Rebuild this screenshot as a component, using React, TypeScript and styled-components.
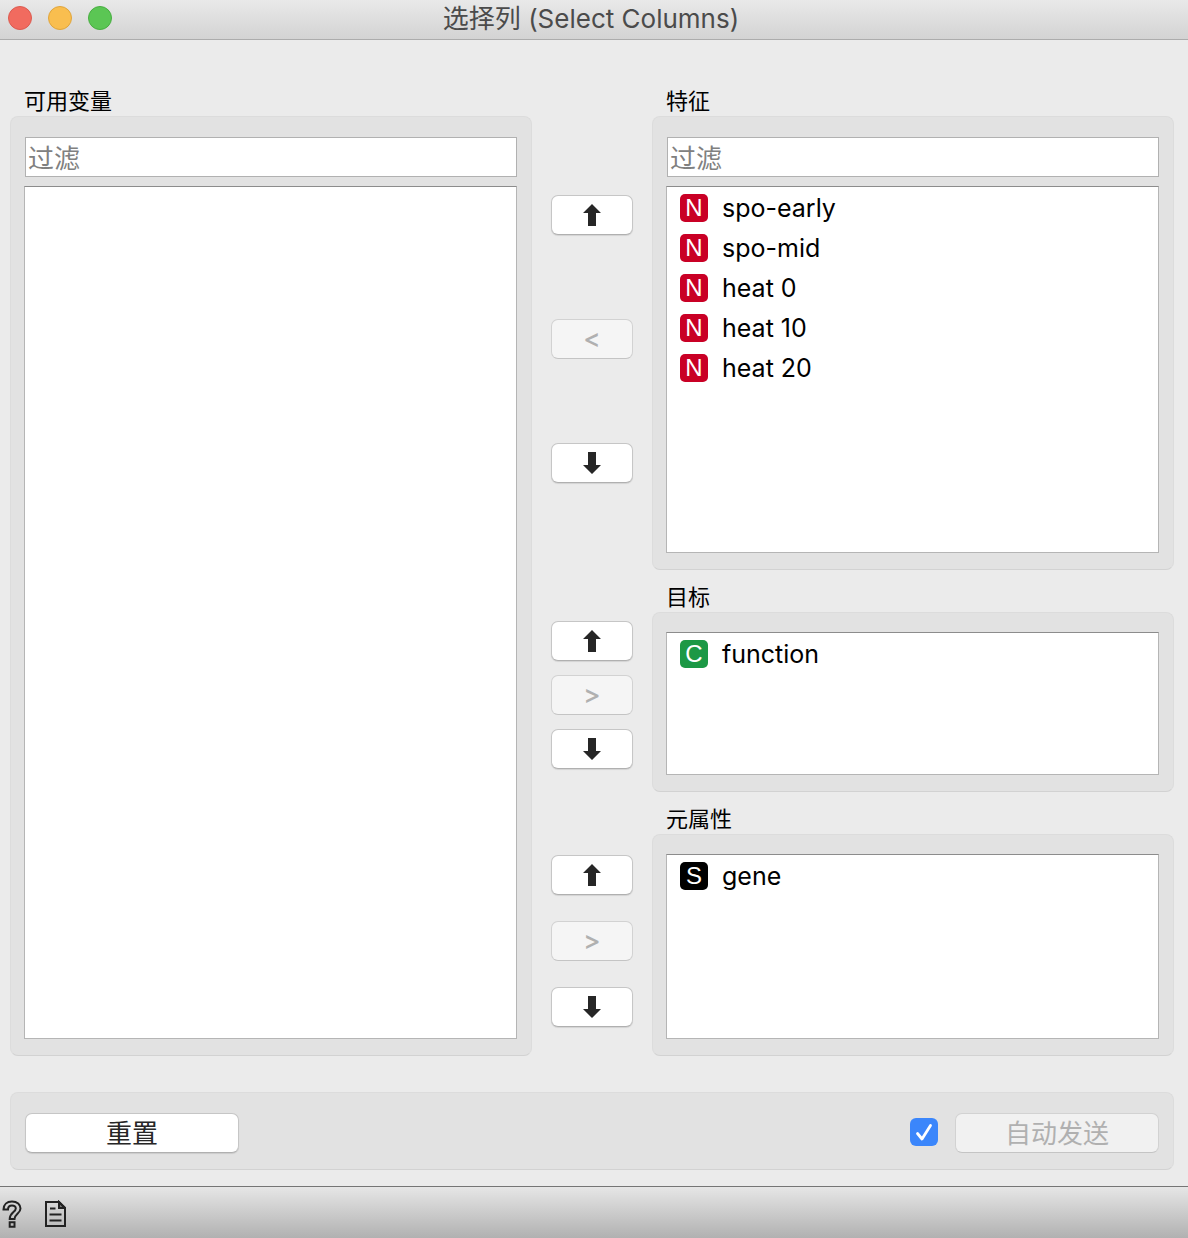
import React from "react";
import styled, { createGlobalStyle } from "styled-components";

const GlobalStyle = createGlobalStyle`
  *, *::before, *::after { box-sizing: border-box; }
  body {
    margin: 0;
    background: #ebebeb;
    color: #000;
    font-family: Inter, "Noto Sans CJK SC", sans-serif;
  }
  button, input { font-family: inherit; }
`;

const Window = styled.div`
  display: flex;
  flex-direction: column;
  min-height: 100vh;
`;

const TitleBar = styled.header`
  display: grid;
  grid-template-columns: 1fr auto 1fr;
  height: 40px;
  padding: 0 14px 0 8px;
  background: linear-gradient(#e9e9e9, #d3d3d3);
  border-bottom: 1px solid #acacac;
`;

const WindowControls = styled.div`
  display: flex;
  gap: 16px;
  padding-top: 6px;
`;

const Light = styled.button<{ $fill: string; $edge: string }>`
  width: 24px;
  height: 24px;
  padding: 0;
  border: 1px solid ${(p) => p.$edge};
  border-radius: 50%;
  background: ${(p) => p.$fill};
`;

const Title = styled.h1`
  margin: 0;
  font-size: 26px;
  font-weight: 400;
  line-height: 38px;
  color: #4b4b4b;
`;

const Columns = styled.main`
  flex: 1;
  display: grid;
  grid-template-columns: 1fr 120px 1fr;
  grid-template-rows: 496fr 222fr 264fr;
  padding: 34px 14px 0 10px;
`;

const Group = styled.section<{ $tall?: boolean }>`
  display: flex;
  flex-direction: column;
  min-width: 0;
  grid-row: ${(p) => (p.$tall ? "1 / span 3" : "auto")};
`;

const GroupTitle = styled.h2`
  margin: 0;
  height: 42px;
  padding: 11px 14px 0;
  font-size: 22px;
  font-weight: 400;
  line-height: 32px;
`;

const Box = styled.div`
  flex: 1;
  display: flex;
  flex-direction: column;
  padding: 19px 14px 16px 13px;
  background: #e2e2e2;
  border: 1px solid #dcdcdc;
  border-bottom-color: #d2d2d2;
  border-radius: 8px;
`;

const Filter = styled.input`
  height: 40px;
  min-width: 0;
  margin: 1px 0 9px 1px;
  padding: 3px 2px 0;
  border: 1px solid #b1b1b1;
  border-radius: 0;
  background: #fff;
  font-size: 26px;
  outline: none;
  &::placeholder { color: #808080; opacity: 1; }
`;

const List = styled.ul`
  flex: 1;
  margin: 0;
  padding: 1px 0;
  list-style: none;
  background: #fff;
  border: 1px solid #b5b5b5;
  border-top-color: #8c8c8c;
`;

const Item = styled.li`
  display: flex;
  align-items: center;
  gap: 14px;
  height: 40px;
  padding-left: 13px;
  font-size: 25px;
`;

const Badge = styled.span<{ $color: string }>`
  width: 28px;
  height: 28px;
  border-radius: 5px;
  background: ${(p) => p.$color};
  color: #fff;
  font-family: "Liberation Sans", sans-serif;
  font-size: 24px;
  line-height: 28px;
  text-align: center;
`;

const Mover = styled.div<{ $bottom: number }>`
  display: flex;
  flex-direction: column;
  align-items: center;
  justify-content: space-evenly;
  padding: 37px 0 ${(p) => p.$bottom}px;
`;

const PushButton = styled.button<{ $width: number }>`
  display: flex;
  align-items: center;
  justify-content: center;
  width: ${(p) => p.$width}px;
  height: 40px;
  padding: 0;
  border: 1px solid #c6c6c6;
  border-bottom-color: #b0b0b0;
  border-radius: 7px;
  background: #fff;
  box-shadow: 0 1px 1px rgba(0, 0, 0, 0.1);
  color: #262626;
  font-size: 26px;
  &:disabled {
    background: rgba(255, 255, 255, 0.5);
    border-color: #d2d2d2;
    border-bottom-color: #c4c4c4;
    box-shadow: none;
    color: #b0b0b0;
  }
`;

const Caption = styled.span`
  padding-bottom: 4px;
`;

const Sign = styled.span`
  font-size: 26px;
  font-weight: 500;
  line-height: 24px;
`;

const Actions = styled(Box)`
  flex: none;
  flex-direction: row;
  align-items: center;
  margin: 36px 14px 16px 10px;
  padding: 20px 14px 16px;
`;

const AutoSend = styled.div`
  display: flex;
  align-items: center;
  gap: 17px;
  margin-left: auto;
`;

const CheckWrap = styled.label`
  display: grid;
  padding-bottom: 2px;
  > * { grid-area: 1 / 1; }
  svg { pointer-events: none; }
`;

const Check = styled.input`
  appearance: none;
  width: 28px;
  height: 28px;
  margin: 0;
  border-radius: 6px;
  background: #fff;
  &:checked { background: #3b86fb; }
`;

const StatusBar = styled.footer`
  display: flex;
  align-items: center;
  gap: 21px;
  height: 52px;
  padding: 3px 0 0 1px;
  border-top: 1px solid #757575;
  background: linear-gradient(#e6e6e6, #b1b1b1);
`;

const IconButton = styled.button`
  display: flex;
  padding: 0;
  border: 0;
  background: none;
`;

const Arrow = ({ down }: { down?: boolean }) => (
  <svg width="18" height="22" viewBox="0 0 18 22" aria-hidden="true">
    <path
      fill="#262626"
      d={down ? "M5 0h8v13h5l-9 9-9-9h5z" : "M9 0l9 9h-5v13H5V9H0z"}
    />
  </svg>
);

const COLORS: Record<string, string> = { N: "#c90025", C: "#1c9845", S: "#000" };

type Variable = { kind: string; name: string };

const features: Variable[] = ["spo-early", "spo-mid", "heat 0", "heat 10", "heat 20"].map(
  (name) => ({ kind: "N", name })
);

function VariableGroup(props: {
  title: string;
  items: Variable[];
  filter?: boolean;
  tall?: boolean;
}) {
  const { title, items, filter, tall } = props;
  return (
    <Group $tall={tall}>
      <GroupTitle>{title}</GroupTitle>
      <Box>
        {filter && <Filter type="text" placeholder="过滤" aria-label={title} />}
        <List aria-label={title}>
          {items.map((v) => (
            <Item key={v.name}>
              <Badge $color={COLORS[v.kind]}>{v.kind}</Badge>
              {v.name}
            </Item>
          ))}
        </List>
      </Box>
    </Group>
  );
}

function MoveButtons({ sign, bottom }: { sign: string; bottom: number }) {
  return (
    <Mover $bottom={bottom}>
      <PushButton $width={82} aria-label="Up"><Arrow /></PushButton>
      <PushButton $width={82} disabled><Sign>{sign}</Sign></PushButton>
      <PushButton $width={82} aria-label="Down"><Arrow down /></PushButton>
    </Mover>
  );
}

export default function App() {
  const [auto, setAuto] = React.useState(true);
  return (
    <Window>
      <GlobalStyle />
      <TitleBar>
        <WindowControls>
          <Light $fill="#f16b5f" $edge="#dc5b50" aria-label="Close" />
          <Light $fill="#f9be4f" $edge="#e0a53c" aria-label="Minimize" />
          <Light $fill="#5bc654" $edge="#48ae41" aria-label="Zoom" />
        </WindowControls>
        <Title>选择列 (Select Columns)</Title>
      </TitleBar>
      <Columns>
        <VariableGroup title="可用变量" items={[]} filter tall />
        <MoveButtons sign="<" bottom={3} />
        <VariableGroup title="特征" items={features} filter />
        <MoveButtons sign=">" bottom={9} />
        <VariableGroup title="目标" items={[{ kind: "C", name: "function" }]} />
        <MoveButtons sign=">" bottom={3} />
        <VariableGroup title="元属性" items={[{ kind: "S", name: "gene" }]} />
      </Columns>
      <Actions>
        <PushButton $width={214}><Caption>重置</Caption></PushButton>
        <AutoSend>
          <CheckWrap>
            <Check
              type="checkbox"
              aria-label="自动发送"
              checked={auto}
              onChange={(e) => setAuto(e.target.checked)}
            />
            {auto && (
              <svg width="28" height="28" viewBox="0 0 28 28" fill="none" aria-hidden="true">
                <path
                  d="M7.5 15.5l4.5 5.5L20.5 7.5"
                  stroke="#fff"
                  strokeWidth="2.8"
                  strokeLinecap="round"
                  strokeLinejoin="round"
                />
              </svg>
            )}
          </CheckWrap>
          <PushButton $width={204} disabled><Caption>自动发送</Caption></PushButton>
        </AutoSend>
      </Actions>
      <StatusBar>
        <IconButton aria-label="Help">
          <svg width="22" height="28" viewBox="0 0 22 28" fill="none" stroke="#222" strokeWidth="2">
            <path d="M2.5 9.5C2.5 4.500 5.800 1.500 11 1.500S19.500 4.500 19.500 8.500C19.500 13.500 13.500 14 13.500 19H8.700C8.700 12.500 14.800 12 14.800 8.500C14.800 6.600 13.400 5.400 11 5.400S7 6.900 7 9.500Z" />
            <path d="M8.700 22.300h4.800v4.400H8.700z" />
          </svg>
        </IconButton>
        <IconButton aria-label="Report">
          <svg width="22" height="28" viewBox="0 0 22 28" fill="none" stroke="#222" strokeWidth="2">
            <path d="M2 2h13l6 6v18H2z" />
            <path d="M15 2v6h6z" fill="#222" fillOpacity="0.5" />
            <path d="M6 8.500h5.500M5.500 14.500h12M5.500 20.500h12" />
          </svg>
        </IconButton>
      </StatusBar>
    </Window>
  );
}
